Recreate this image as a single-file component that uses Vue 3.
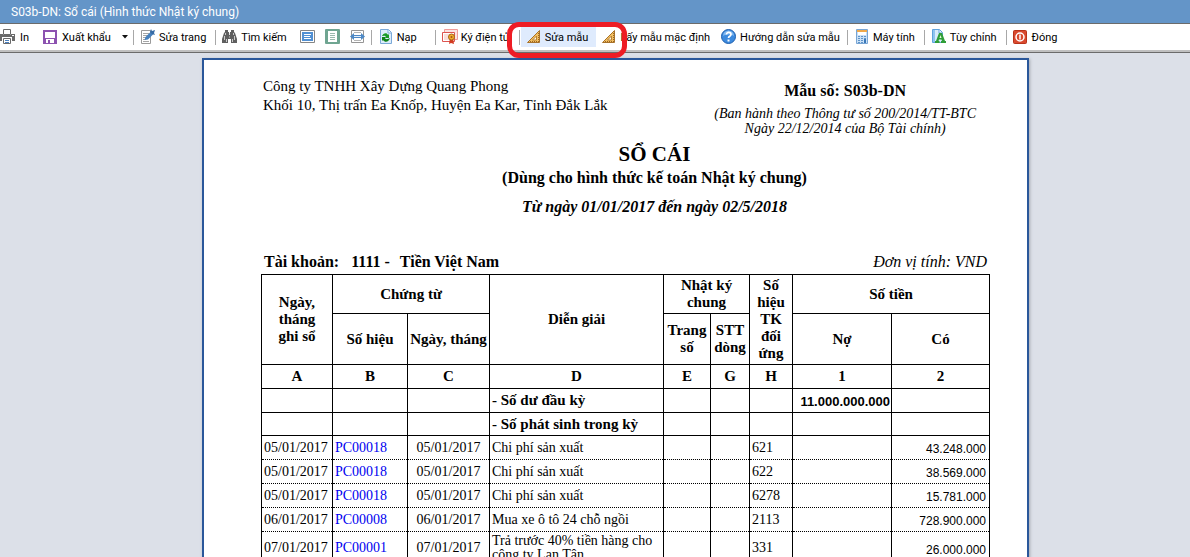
<script setup>
const openingRows = [
  { label: '- Số dư đầu kỳ', debit: '11.000.000.000' },
  { label: '- Số phát sinh trong kỳ', debit: '' },
]

const entries = [
  { posted: '05/01/2017', voucher: 'PC00018', date: '05/01/2017', text: 'Chi phí sản xuất', account: '621', credit: '43.248.000' },
  { posted: '05/01/2017', voucher: 'PC00018', date: '05/01/2017', text: 'Chi phí sản xuất', account: '622', credit: '38.569.000' },
  { posted: '05/01/2017', voucher: 'PC00018', date: '05/01/2017', text: 'Chi phí sản xuất', account: '6278', credit: '15.781.000' },
  { posted: '06/01/2017', voucher: 'PC00008', date: '06/01/2017', text: 'Mua xe ô tô 24 chỗ ngồi', account: '2113', credit: '728.900.000' },
  { posted: '07/01/2017', voucher: 'PC00001', date: '07/01/2017', text: 'Trả trước 40% tiền hàng cho công ty Lan Tân', account: '331', credit: '26.000.000' },
]

const indexes = ['A', 'B', 'C', 'D', 'E', 'G', 'H', '1', '2']
</script>

<template>
  <div class="window">
    <header class="titlebar">S03b-DN: Sổ cái (Hình thức Nhật ký chung)</header>

    <nav class="toolbar" aria-label="Thanh công cụ">
      <button class="tool first" type="button">
        <svg viewBox="0 0 16 16" aria-hidden="true">
          <path d="M3.500.5h7v5h-7z" fill="#fff" stroke="#6a6a6a" />
          <path d="M0 5h3v1h8V5h4v7H0z" fill="#6a6a6a" />
          <path d="M12 6h2v1h-2z" fill="#fff" />
          <path d="M2 8h10v8H2z" fill="#fff" />
          <path d="M3.500 9.500h7v5h-7z" fill="#fff" stroke="#6a6a6a" />
          <path d="M5 11.500h4M5 13.500h4" stroke="#4a80c0" />
        </svg>
        <span>In</span>
      </button>
      <button class="tool" type="button">
        <svg viewBox="0 0 16 16" aria-hidden="true">
          <path d="M1 2h12v12H1z" fill="#fff" stroke="#8c52b0" stroke-width="2" />
          <path d="M1 9h12v5H1z" fill="#8c52b0" />
          <path d="M3 10h8v4H3z" fill="#fff" />
          <path d="M5 11h2v3H5z" fill="#8c52b0" />
        </svg>
        <span>Xuất khẩu</span>
      </button>
      <button class="caret" type="button" aria-label="Chọn định dạng xuất khẩu">
        <svg viewBox="0 0 6 4" aria-hidden="true"><path d="M0 0h6L3 3.5z" fill="#111" /></svg>
      </button>
      <span class="sep"></span>
      <button class="tool" type="button">
        <svg viewBox="0 0 16 16" aria-hidden="true">
          <path d="M1.500 1.500h9v13h-9z" fill="#fff" stroke="#9a9a9a" />
          <path d="M3 4.500h6M3 6.500h5M3 8.500h3M3 10.500h3M3 12.500h6" stroke="#a5a5a5" />
          <path d="M4.500 11l1-3L11 2.500l3 2L8 10.500z" fill="#4680bd" />
          <path d="M11 0l1 2 3-1-1 3 1 2-3-1-2-2z" fill="#376ba4" />
        </svg>
        <span>Sửa trang</span>
      </button>
      <span class="sep"></span>
      <button class="tool" type="button">
        <svg viewBox="0 0 16 16" aria-hidden="true">
          <path d="M3 1h3v2h1v3h1V3h1V1h3v2l1 1 2 6v4H9v-4H6v4H0v-4l2-6 1-1z" fill="#5f5f5f" />
          <path d="M3.500 4v2M2.500 7v4M11.500 4v2M12.500 7v4M4.500 10v3M10.500 10v3M7 5h1M7 8h1" stroke="#c8c8c8" />
        </svg>
        <span>Tìm kiếm</span>
      </button>
      <button class="view" type="button" aria-label="Một trang">
        <svg viewBox="0 0 16 16" aria-hidden="true">
          <path d="M.5 1.500h14v12H.5z" fill="#fff" stroke="#858585" />
          <path d="M2 3h11v9H2z" fill="#5190d3" />
          <path d="M4 5.500h7M4 7.500h6M4 9.500h7" stroke="#fff" />
        </svg>
      </button>
      <button class="view" type="button" aria-label="Cả trang">
        <svg viewBox="0 0 16 16" aria-hidden="true">
          <rect width="15" height="15" rx="1" fill="#6fa591" />
          <path d="M3 2h9v11H3z" fill="#fff" />
          <path d="M5 4.500h5M5 6.500h5M5 8.500h5M5 10.500h5" stroke="#9ab9ad" />
        </svg>
      </button>
      <button class="view" type="button" aria-label="Chiều rộng trang">
        <svg viewBox="0 0 16 16" aria-hidden="true">
          <path d="M1.500 1.500h12v12h-12z" fill="#fff" stroke="#959595" />
          <path d="M4 3.500h7M4 11.500h7" stroke="#b5b5b5" />
          <path d="M0 7.500L4 4v2h7V4l4 3.500L11 11V9H4v2z" fill="#4d88c5" />
          <path d="M4 7.500h7" stroke="#e5effa" />
        </svg>
      </button>
      <span class="sep"></span>
      <button class="tool reload" type="button">
        <svg viewBox="0 0 16 16" aria-hidden="true">
          <path d="M2.500.5h8l3 3v11h-11z" fill="#dcecfb" stroke="#7ba9d8" />
          <path d="M10 1v3h3" fill="#fff" stroke="#7ba9d8" />
          <path d="M4 7c1-3 5-4 6-1l1-1v4H7l1-1c-1-2-3-1-4-1z" fill="#189a24" />
          <path d="M12 9c-1 4-5 5-7 2l-1 1V8h4l-1 1c1 2 3 1 5 0z" fill="#0d8218" />
        </svg>
        <span>Nạp</span>
      </button>
      <span class="sep"></span>
      <button class="tool" type="button">
        <svg viewBox="0 0 16 16" aria-hidden="true">
          <path d="M2.500.5h13v10h-13z" fill="#fbe3e2" stroke="#ef9a98" />
          <path d="M.5 3.500h12v9H.5z" fill="#fff" stroke="#dd5450" />
          <path d="M2 5h9v6H2z" fill="#f8dedb" />
          <path d="M8 9l-1 6 2-1 3 1-1-6z" fill="#d33a20" />
          <circle cx="9.500" cy="8" r="3" fill="#f0ad2c" stroke="#a86518" />
          <circle cx="9.500" cy="8" r="1" fill="#a84b18" />
        </svg>
        <span>Ký điện tử</span>
      </button>
      <span class="sep"></span>
      <span class="marked">
        <button class="tool active" type="button">
          <svg viewBox="0 0 16 16" aria-hidden="true">
            <path d="M13.500 1.500v12H1.500z" fill="#f2bf62" stroke="#a8722a" />
            <path d="M10.500 7v4h-4z" fill="#fff8ea" stroke="#b98235" />
            <path d="M12.500 4v9M4 12.500h9" stroke="#9b651f" stroke-dasharray="1 1" />
          </svg>
          <span>Sửa mẫu</span>
        </button>
        <span class="marker" aria-hidden="true"></span>
      </span>
      <button class="tool tight" type="button">
        <svg viewBox="0 0 16 16" aria-hidden="true">
          <path d="M13.500 1.500v12H1.500z" fill="#f2bf62" stroke="#a8722a" />
          <path d="M10.500 7v4h-4z" fill="#fff8ea" stroke="#b98235" />
          <path d="M12.500 4v9M4 12.500h9" stroke="#9b651f" stroke-dasharray="1 1" />
        </svg>
        <span>Lấy mẫu mặc định</span>
      </button>
      <button class="tool tight" type="button">
        <svg viewBox="0 0 16 16" aria-hidden="true">
          <circle cx="7.500" cy="7.500" r="7" fill="#3c8ade" stroke="#1e5fae" />
          <path d="M2 7a5.500 5.500 0 0 1 11 0c-3-2-8-2-11 0z" fill="#82b9f0" />
          <path d="M5.500 5.500c0-3 4.500-2.500 4.500 0C10 7.500 7.500 7 7.500 9" fill="none" stroke="#fff" stroke-width="1.700" />
          <path d="M6.500 10.500h2v2h-2z" fill="#fff" />
        </svg>
        <span>Hướng dẫn sửa mẫu</span>
      </button>
      <span class="sep"></span>
      <button class="tool" type="button">
        <svg viewBox="0 0 16 16" aria-hidden="true">
          <path d="M2.500.5h11v14h-11z" fill="#c9e0f6" stroke="#78a5d4" />
          <path d="M4 2h8v4H4z" fill="#fff" />
          <path d="M3 2h10" stroke="#f0a94a" stroke-width="2" />
          <path d="M4 7.500h8M4 9.500h8M4 11.500h8M4 13.500h8" stroke="#5f94c9" stroke-dasharray="2 1" />
          <path d="M10 10h2v4h-2z" fill="#3a77b8" />
        </svg>
        <span>Máy tính</span>
      </button>
      <span class="sep"></span>
      <button class="tool" type="button">
        <svg viewBox="0 0 16 16" aria-hidden="true">
          <path d="M1.500.5h7l3 3v10h-10z" fill="#d8ebfc" stroke="#5fa2dc" />
          <path d="M2 1h2v12H2z" fill="#8fc4ef" />
          <path d="M8 1v3h3" fill="#fff" stroke="#5fa2dc" />
          <path d="M8 4h3l3 8h1v2h-5v-2h1l-.5-1.500H8L7.500 12h1v2H4v-2h1z" fill="#2f9e38" />
          <path d="M9.500 6l1 3h-2z" fill="#e8f7e5" />
        </svg>
        <span>Tùy chỉnh</span>
      </button>
      <span class="sep"></span>
      <button class="tool" type="button">
        <svg viewBox="0 0 16 16" aria-hidden="true">
          <rect x=".5" y="1.500" width="13" height="13" rx="1" fill="#d9492e" stroke="#b93219" />
          <circle cx="7" cy="8" r="4" fill="none" stroke="#fff" stroke-width="1.500" />
          <path d="M7 5.500v5" stroke="#fff" stroke-width="1.500" />
        </svg>
        <span>Đóng</span>
      </button>
    </nav>

    <main class="desk">
      <article class="paper">
        <div class="head">
          <div class="company">
            <div>Công ty TNHH Xây Dựng Quang Phong</div>
            <div>Khối 10, Thị trấn Ea Knốp, Huyện Ea Kar, Tỉnh Đắk Lắk</div>
          </div>
          <div class="form">
            <strong>Mẫu số: S03b-DN</strong>
            <em>(Ban hành theo Thông tư số 200/2014/TT-BTC<br />Ngày 22/12/2014 của Bộ Tài chính)</em>
          </div>
        </div>

        <div class="heading">
          <h1>SỔ CÁI</h1>
          <h2>(Dùng cho hình thức kế toán Nhật ký chung)</h2>
          <p>Từ ngày 01/01/2017 đến ngày 02/5/2018</p>
        </div>

        <div class="account">
          <strong><span class="key">Tài khoản:</span><span>1111 -</span><span class="name">Tiền Việt Nam</span></strong>
          <em>Đơn vị tính: VND</em>
        </div>

        <table>
          <colgroup>
            <col class="c-posted" /><col class="c-voucher" /><col class="c-date" /><col class="c-text" />
            <col class="c-page" /><col class="c-line" /><col class="c-account" /><col class="c-debit" /><col class="c-credit" />
          </colgroup>
          <thead>
            <tr class="upper">
              <th rowspan="2">Ngày, tháng<br />ghi sổ</th>
              <th colspan="2">Chứng từ</th>
              <th rowspan="2">Diễn giải</th>
              <th colspan="2">Nhật ký chung</th>
              <th rowspan="2">Số hiệu TK đối ứng</th>
              <th colspan="2">Số tiền</th>
            </tr>
            <tr class="lower">
              <th>Số hiệu</th>
              <th>Ngày, tháng</th>
              <th>Trang số</th>
              <th>STT dòng</th>
              <th>Nợ</th>
              <th>Có</th>
            </tr>
            <tr>
              <th v-for="i in indexes" :key="i">{{ i }}</th>
            </tr>
          </thead>
          <tbody class="opening">
            <tr v-for="row in openingRows" :key="row.label">
              <td></td><td></td><td></td>
              <td>{{ row.label }}</td>
              <td></td><td></td><td></td>
              <td class="amount">{{ row.debit }}</td>
              <td></td>
            </tr>
          </tbody>
          <tbody class="entries">
            <tr v-for="(row, n) in entries" :key="n">
              <td>{{ row.posted }}</td>
              <td><a href="#">{{ row.voucher }}</a></td>
              <td class="mid">{{ row.date }}</td>
              <td>{{ row.text }}</td>
              <td></td><td></td>
              <td>{{ row.account }}</td>
              <td></td>
              <td class="amount">{{ row.credit }}</td>
            </tr>
          </tbody>
        </table>
      </article>
    </main>
  </div>
</template>

<style>
body {
  background: #dce0e8;
}
</style>

<style scoped>
.window {
  display: flex;
  flex-direction: column;
  height: 100vh;
  overflow: hidden;
  background: #dce0e8;
}

.titlebar {
  flex: none;
  padding: 2px 0 0 11px;
  background: #6495c8;
  color: #fff;
  font: 12px/21px Roboto, "Noto Sans", sans-serif;
  white-space: nowrap;
}

.toolbar {
  flex: none;
  display: flex;
  align-items: center;
  height: 26px;
  border-top: 1px solid #6b6b6b;
  border-bottom: 2px solid #c0c0c0;
  box-shadow: 0 1px #6b6b6b;
  background: #fff;
}

button {
  display: flex;
  align-items: center;
  flex: none;
  height: 20px;
  margin: 0;
  border: 0;
  background: none;
  color: #000;
  font: 11px/18px Roboto, "Noto Sans", sans-serif;
  white-space: nowrap;
}

.tool {
  gap: 3px;
  padding: 0 8px 0 5px;
}

.tool span {
  padding-top: 2px;
}

.tool svg,
.view svg {
  flex: none;
  width: 16px;
  height: 16px;
}

.first {
  padding: 0 9px 0 0;
  gap: 4px;
}

.tight {
  padding-right: 6px;
}

.reload {
  padding-right: 17px;
}

.active {
  background: #dfebfd;
}

.caret {
  justify-content: center;
  width: 13px;
  padding: 0;
}

.caret svg {
  width: 6px;
  height: 4px;
}

.view {
  padding: 0 4px 0 5px;
}

.sep {
  flex: none;
  width: 1px;
  height: 15px;
  margin: 0 1px;
  background: #a8a8a8;
}

.marked {
  position: relative;
  flex: none;
}

.marker {
  position: absolute;
  inset: -5px -31px -11px -14px;
  z-index: 1;
  border: 5px solid #ee1c24;
  border-radius: 12px;
  pointer-events: none;
}

.desk {
  display: grid;
  grid-template-columns: 202fr 827fr 161fr;
  padding-top: 6px;
}

.paper {
  grid-column: 2;
  min-width: 0;
  padding: 17px 37px 40px 57px;
  border: 2px solid #2a579a;
  background: #fff;
  box-shadow: 1px 1px 3px #a5a9b1;
  color: #000;
  font-family: "Liberation Serif", "Times New Roman", serif;
}

.head {
  display: flex;
  justify-content: space-between;
  padding: 0 14px 0 2px;
}

.company {
  font-size: 15px;
  line-height: 19px;
}

.form {
  display: flex;
  flex-direction: column;
  gap: 5px;
  padding-top: 4px;
  text-align: center;
}

.form strong {
  font-size: 16px;
  line-height: 20px;
}

.form em {
  font-size: 14px;
  line-height: 15px;
}

.heading {
  padding: 6px 0 0 58px;
  text-align: center;
}

h1,
h2,
p {
  margin: 0;
  font-size: 16px;
  font-weight: bold;
  line-height: 20px;
}

h1 {
  font-size: 21px;
  line-height: 24px;
}

h2 {
  margin: 2px 0 9px;
}

p {
  font-style: italic;
}

.account {
  display: flex;
  justify-content: space-between;
  margin: 35px 0 2px;
  padding: 0 3px;
  font-size: 16px;
  line-height: 20px;
}

.key {
  margin-right: 12px;
}

.name {
  margin-left: 10px;
}

table {
  width: 100%;
  table-layout: fixed;
  border-collapse: collapse;
}

.c-posted { width: 71px; }
.c-voucher { width: 75px; }
.c-date { width: 82px; }
.c-text { width: 174px; }
.c-page { width: 47px; }
.c-line { width: 39px; }
.c-account { width: 43px; }
.c-debit { width: 99px; }
.c-credit { width: 98px; }

th,
td {
  height: 23px;
  padding: 0 1px;
  border: 1px solid #000;
  font-size: 15px;
  line-height: 17px;
}

td {
  padding: 0 2px;
  text-align: left;
}

.upper th {
  height: 38px;
}

.lower th {
  height: 50px;
}

.opening td {
  font-weight: bold;
}

.opening tr:last-child td:not(.amount) {
  height: 22px;
}

.entries td {
  border-top-style: dotted;
  border-bottom-style: dotted;
  font-size: 14px;
  line-height: 14px;
}

.entries tr:first-child td {
  border-top-style: solid;
}

.entries tr:last-child td:not(.amount) {
  height: 32px;
}

.opening .amount,
.entries .amount {
  height: 19px;
  padding-top: 3px;
  padding-right: 3px;
  font-family: "Liberation Sans", Arial, sans-serif;
  font-size: 12px;
  line-height: 14px;
  text-align: right;
}

.opening .amount {
  padding-right: 1px;
  font-size: 13px;
}

.entries .mid {
  text-align: center;
}

a {
  color: #0000f0;
  text-decoration: none;
}
</style>
